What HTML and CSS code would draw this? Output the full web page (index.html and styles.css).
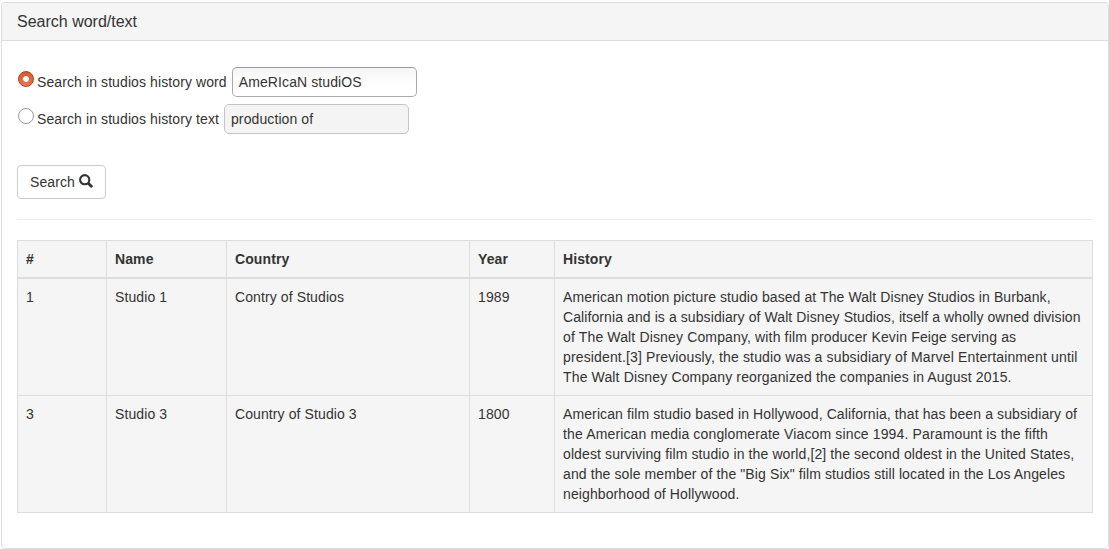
FILE: index.html
```html
<!DOCTYPE html>
<html lang="en">
<head>
<meta charset="utf-8">
<title>Search word/text</title>
<link rel="stylesheet" href="styles.css">
</head>
<body>
<section class="panel">
  <header class="panel-heading">Search word/text</header>
  <div class="panel-body">
    <div class="option"><span class="radio checked"></span><label>Search in studios history word</label><span class="field">AmeRIcaN studiOS</span></div>
    <div class="option"><span class="radio"></span><label>Search in studios history text</label><span class="field disabled">production of</span></div>
    <button class="btn">Search <svg class="icon" viewBox="0 0 14 14"><circle cx="5.7" cy="5.7" r="4.6" fill="none" stroke="#333" stroke-width="2.1"/><path d="M9 9L13.1 13.1" stroke="#333" stroke-width="2.7"/></svg></button>
    <hr>
    <table>
      <colgroup><col class="c1"><col class="c2"><col class="c3"><col class="c4"><col class="c5"></colgroup>
      <thead><tr><th>#</th><th>Name</th><th>Country</th><th>Year</th><th>History</th></tr></thead>
      <tbody>
        <tr><td>1</td><td>Studio 1</td><td>Contry of Studios</td><td>1989</td><td class="history"><span class="snug">American motion picture studio based at The Walt Disney Studios in Burbank,</span><br><span class="snug">California and is a subsidiary of Walt Disney Studios, itself a wholly owned division</span><br><span class="loose">of The Walt Disney Company, with film producer Kevin Feige serving as</span><br><span class="loose">president.[3] Previously, the studio was a subsidiary of Marvel Entertainment until</span><br><span class="loose">The Walt Disney Company reorganized the companies in August 2015.</span></td></tr>
        <tr><td>3</td><td>Studio 3</td><td>Country of Studio 3</td><td>1800</td><td class="history">American film studio based in Hollywood, California, that has been a subsidiary of<br><span class="loose">the American media conglomerate Viacom since 1994. Paramount is the fifth</span><br>oldest surviving film studio in the world,[2] the second oldest in the United States,<br>and the sole member of the "Big Six" film studios still located in the Los Angeles<br>neighborhood of Hollywood.</td></tr>
      </tbody>
    </table>
  </div>
</section>
</body>
</html>
```
FILE: styles.css
```css
* { box-sizing: border-box; }
body { margin: 0; background: #fff; color: #333; font: 14px/20px "Liberation Sans", Arial, sans-serif; letter-spacing: 0.1px; overflow: hidden; }
.panel { margin: 2px 0 0 1px; height: 547px; width: 1108px; border: 1px solid #ddd; border-radius: 4px; }
.panel-heading { height: 38px; padding: 9px 15px; background: #f5f5f5; border-bottom: 1px solid #ddd; border-radius: 3px 3px 0 0; font-size: 16px; line-height: 20px; letter-spacing: 0; }
.panel-body { padding: 26px 15px 0; }
.option { display: flex; height: 30px; margin-bottom: 7px; align-items: center; }
.radio { width: 16px; height: 16px; margin: -6px 3px 0 1px; border: 1px solid #999; border-radius: 50%; background: #fff; }
.radio.checked { border: 1px solid #a8452a; background: radial-gradient(circle, #fff 0 2.5px, transparent 3.3px), linear-gradient(#d4582f, #e57b55); }
.field { width: 185px; height: 30px; margin-left: 5px; padding: 4px 6px; border: 1px solid #aaa; border-top-color: #999; border-radius: 5px; background: linear-gradient(#f5f5f5, #fff 60%); white-space: nowrap; }
.field.disabled { background: #f4f4f4; border-color: #c4c4c4; }
.btn { display: flex; align-items: center; gap: 4px; width: 89px; height: 34px; margin-top: 31px; padding: 0 12px; border: 1px solid #ccc; border-radius: 4px; background: #fff; color: #333; font: inherit; letter-spacing: inherit; }
.icon { width: 14px; height: 14px; flex: none; margin-top: -2px; }
hr { margin: 20px 0; border: 0; border-top: 1px solid #eee; }
table { width: 1076px; table-layout: fixed; border-collapse: collapse; background: #f5f5f5; }
.c1 { width: 89px; } .c2 { width: 120px; } .c3 { width: 243px; } .c4 { width: 85px; }
th, td { padding: 8px; border: 1px solid #ddd; text-align: left; vertical-align: top; }
th { border-bottom-width: 2px; }
.history { letter-spacing: 0.11px; white-space: nowrap; }
.snug { letter-spacing: 0.09px; }
.loose { letter-spacing: 0.145px; }
```
